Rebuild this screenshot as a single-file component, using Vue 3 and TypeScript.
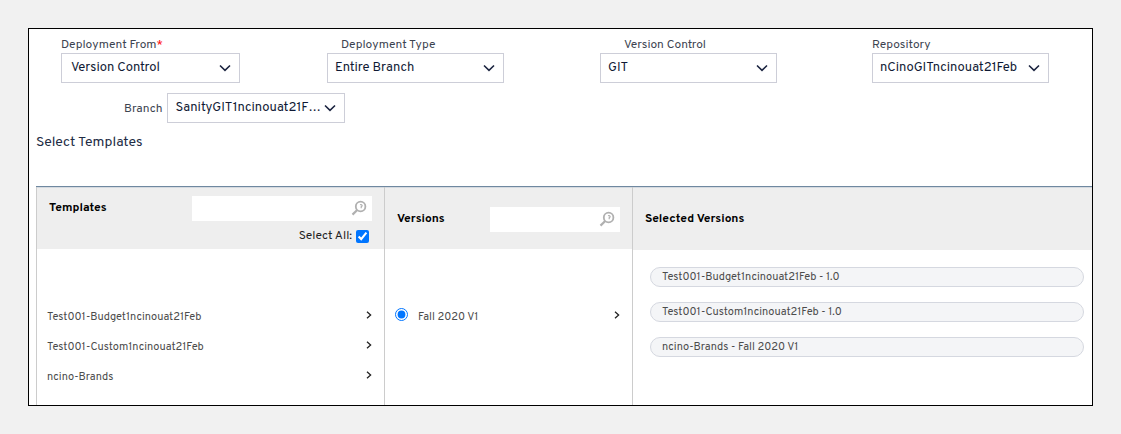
<script setup lang="ts">
import { ref } from 'vue'

interface Field {
  id: string
  label: string
  value: string
  required?: boolean
  kind: string
}

const fields: Field[] = [
  { id: 'from', label: 'Deployment From', value: 'Version Control', required: true, kind: 'from' },
  { id: 'type', label: 'Deployment Type', value: 'Entire Branch', kind: 'type' },
  { id: 'control', label: 'Version Control', value: 'GIT', kind: 'control' },
  { id: 'repository', label: 'Repository', value: 'nCinoGITncinouat21Feb', kind: 'repository' },
]
const templates: string[] = ['Test001-Budget1ncinouat21Feb', 'Test001-Custom1ncinouat21Feb', 'ncino-Brands']
const selected: string[] = [
  'Test001-Budget1ncinouat21Feb - 1.0',
  'Test001-Custom1ncinouat21Feb - 1.0',
  'ncino-Brands - Fall 2020 V1',
]
const selectAll = ref(true)
const version = ref('Fall 2020 V1')
</script>

<template>
  <main class="panel">
    <form class="filters" @submit.prevent>
      <div class="fields">
        <div v-for="f in fields" :key="f.id" class="field" :class="f.kind">
          <label :for="f.id">{{ f.label }}<span v-if="f.required" class="required">*</span></label>
          <div class="picker">
            <select :id="f.id"><option>{{ f.value }}</option></select>
            <svg class="chevron" viewBox="0 0 12 8" aria-hidden="true"><path d="M1 1.5 6 6.3 11 1.5" /></svg>
          </div>
        </div>
      </div>
      <div class="branch">
        <label for="branch">Branch</label>
        <div class="picker">
          <select id="branch"><option>SanityGIT1ncinouat21F…</option></select>
          <svg class="chevron" viewBox="0 0 12 8" aria-hidden="true"><path d="M1 1.5 6 6.3 11 1.5" /></svg>
        </div>
      </div>
    </form>
    <h1>Select Templates</h1>
    <div class="columns">
      <section class="column">
        <header class="top">
          <div class="bar">
            <h2>Templates</h2>
            <div class="search wide">
              <input type="text" aria-label="Search templates" />
              <svg viewBox="0 0 16 16" aria-hidden="true">
                <circle cx="9.6" cy="6.5" r="4.8" /><path class="handle" d="M6.2 10 1.5 14.6" /><path class="glint" d="M9 4.8c2-.6 3 1.2 1.2 1.9v1.6" />
              </svg>
            </div>
          </div>
          <label class="all">Select All: <input v-model="selectAll" type="checkbox" /></label>
        </header>
        <ul class="list">
          <li v-for="t in templates" :key="t">
            <button type="button" class="row">
              <span>{{ t }}</span>
              <svg class="next" viewBox="0 0 6 8" aria-hidden="true"><path d="M1 .8 4.6 4 1 7.2" /></svg>
            </button>
          </li>
        </ul>
      </section>
      <section class="column">
        <header>
          <div class="bar">
            <h2>Versions</h2>
            <div class="search">
              <input type="text" aria-label="Search versions" />
              <svg viewBox="0 0 16 16" aria-hidden="true">
                <circle cx="9.6" cy="6.5" r="4.8" /><path class="handle" d="M6.2 10 1.5 14.6" /><path class="glint" d="M9 4.8c2-.6 3 1.2 1.2 1.9v1.6" />
              </svg>
            </div>
          </div>
        </header>
        <ul class="list">
          <li>
            <label class="row">
              <input v-model="version" type="radio" name="version" value="Fall 2020 V1" />
              <span>Fall 2020 V1</span>
              <svg class="next" viewBox="0 0 6 8" aria-hidden="true"><path d="M1 .8 4.6 4 1 7.2" /></svg>
            </label>
          </li>
        </ul>
      </section>
      <section class="column">
        <header class="tall"><h2>Selected Versions</h2></header>
        <ul class="chips">
          <li v-for="s in selected" :key="s">{{ s }}</li>
        </ul>
      </section>
    </div>
  </main>
</template>

<style>
body {
  background: #f1f1f1;
}
</style>

<style scoped>
* {
  box-sizing: border-box;
}
.panel {
  display: flex;
  flex-direction: column;
  min-height: calc(100vh - 56px);
  margin: 28px;
  border: 1px solid #000;
  background: #fff;
  color: #3d4451;
  font: 12px/16px Overpass, Roboto, sans-serif;
}
.fields {
  display: grid;
  grid-template-columns: 266fr 273fr 272fr 220fr;
  padding: 8px 0 0 32px;
}
.field label {
  display: block;
}
.type label {
  padding-left: 14px;
}
.control label {
  padding-left: 24px;
}
.required {
  color: #f00;
}
.picker {
  position: relative;
  width: 177px;
}
.from .picker {
  width: 179px;
}
.branch .picker {
  width: 178px;
}
select {
  display: block;
  width: 100%;
  height: 30px;
  padding: 0 20px 1px 7px;
  border: 1px solid #cdced8;
  border-radius: 0;
  appearance: none;
  background: #fff;
  color: #0f1934;
  font: 400 13px/16px Overpass, Roboto, sans-serif;
}
.from select {
  padding-left: 9px;
}
.chevron {
  position: absolute;
  top: 11px;
  right: 9px;
  width: 12px;
  height: 8px;
  fill: none;
  stroke: #1b2440;
  stroke-width: 1.6;
  pointer-events: none;
}
.branch {
  display: flex;
  align-items: center;
  gap: 5px;
  padding: 10px 0 0 95px;
}
.branch label {
  padding-top: 2px;
}
h1 {
  margin: 11px 0 34px 7px;
  color: #222c44;
  font-size: 14px;
  font-weight: 400;
  line-height: 18px;
}
.columns {
  display: grid;
  flex: 1;
  grid-template-columns: 348fr 248fr 460fr;
  margin-left: 7px;
  border-top: 1px solid #6f88a0;
}
.column {
  border-left: 1px solid #ccc;
}
header {
  display: flex;
  flex-direction: column;
  justify-content: center;
  height: 62px;
  padding: 2px 12px 0;
  border-top: 1px solid #d5dae0;
  background: #eee;
}
.top {
  justify-content: flex-start;
  padding-top: 8px;
}
.tall {
  height: 63px;
}
.bar {
  display: flex;
  align-items: center;
  justify-content: space-between;
}
h2 {
  margin: 0;
  padding-bottom: 2px;
  color: #000;
  font-size: 12px;
  font-weight: 700;
  line-height: 16px;
}
.search {
  position: relative;
  width: 130px;
}
.wide {
  width: 180px;
}
.search input {
  display: block;
  width: 100%;
  height: 25px;
  padding: 0 24px 0 6px;
  border: 0;
  background: #fff;
}
.search svg {
  position: absolute;
  top: 4px;
  right: 5px;
  width: 16px;
  height: 16px;
  fill: none;
  stroke: #b0b0b0;
  stroke-width: 1.8;
}
.search .handle {
  stroke-width: 2.2;
}
.search .glint {
  stroke-width: 1.2;
}
.all {
  display: flex;
  align-items: center;
  justify-content: flex-end;
  gap: 4px;
  padding: 7px 3px 0 0;
  color: #222;
}
.all input,
.row input {
  width: 13px;
  height: 13px;
  margin: 0;
  accent-color: #0075ff;
}
ul {
  margin: 0;
  padding: 0;
  list-style: none;
}
.list {
  padding-top: 53px;
}
.row {
  display: flex;
  align-items: center;
  width: 100%;
  height: 30px;
  padding: 0 12px 0 10px;
  border: 0;
  background: none;
  color: #4c4c4c;
  font: 11px/16px Overpass, Roboto, sans-serif;
}
.row input {
  margin: 0 10px 5px 0;
}
.next {
  width: 6px;
  height: 8px;
  margin: 0 0 5px auto;
  fill: none;
  stroke: #222;
  stroke-width: 1.3;
}
.chips {
  display: grid;
  gap: 15px;
  padding: 17px 8px 17px 17px;
}
.chips li {
  height: 20px;
  padding-left: 11px;
  border: 1px solid #d5d8e0;
  border-radius: 10px;
  background: #f4f5f7;
  color: #4c4c4c;
  font-size: 11px;
  line-height: 18px;
}
</style>
